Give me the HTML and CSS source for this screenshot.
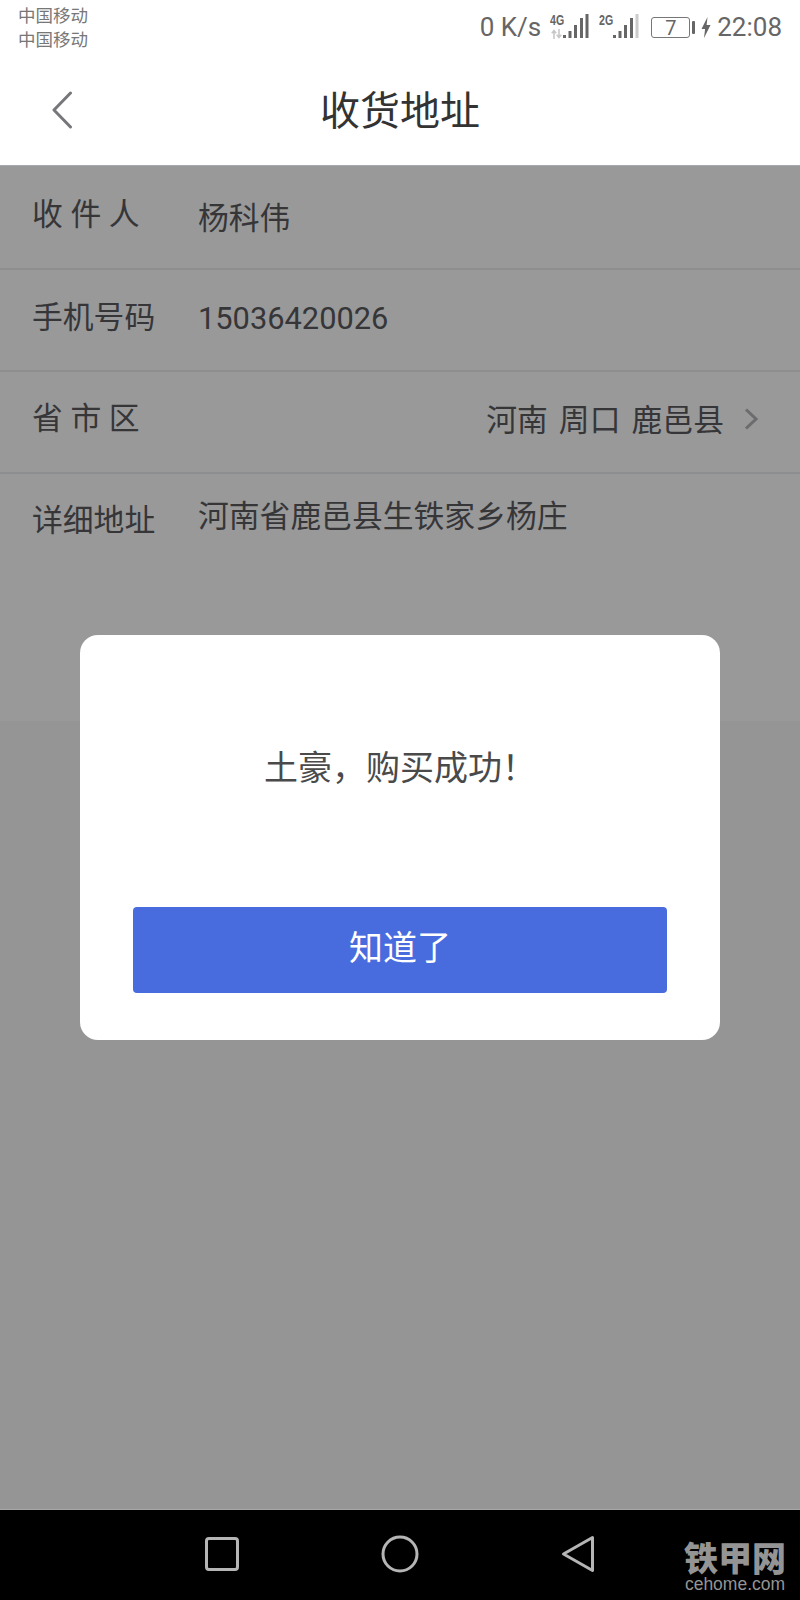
FILE: index.html
```html
<!DOCTYPE html>
<html lang="zh-CN">
<head>
  <meta charset="UTF-8" />
  <meta name="viewport" content="width=device-width, initial-scale=1.0"/>
  <title>收货地址</title>
  <link rel="stylesheet" href="styles.css">
</head>
<body>
  <div class="status-bar">
    <div class="carriers">
      <span>中国移动</span>
      <span>中国移动</span>
    </div>
    <div class="status-right">
      <span class="net-speed">0 K/s</span>
      <div class="signal signal-4g">
        <span class="signal-type">4G</span>
        <svg class="signal-arrows" width="12" height="10" viewBox="0 0 12 10">
          <path d="M3 10V2M0.8 4.2L3 1.5l2.2 2.7M8 0v8M5.8 5.8L8 8.5l2.2-2.7" fill="none" stroke="#c8c8c8" stroke-width="1.6"/>
        </svg>
        <svg class="signal-bars" width="26" height="26" viewBox="0 0 26 26">
          <rect x="0" y="22" width="3" height="3" fill="#666"/>
          <rect x="5.5" y="18" width="3" height="7" fill="#666"/>
          <rect x="11" y="12" width="3" height="13" fill="#666"/>
          <rect x="17" y="5" width="3" height="20" fill="#666"/>
          <rect x="22.5" y="1" width="3" height="24" fill="#666"/>
        </svg>
      </div>
      <div class="signal signal-2g">
        <span class="signal-type">2G</span>
        <svg class="signal-bars" width="26" height="26" viewBox="0 0 26 26">
          <rect x="0" y="22" width="3" height="3" fill="#666"/>
          <rect x="5.5" y="18" width="3" height="7" fill="#666"/>
          <rect x="11" y="12" width="3" height="13" fill="#666"/>
          <rect x="17" y="5" width="3" height="20" fill="#666"/>
          <rect x="22.5" y="1" width="3" height="24" fill="#ccc"/>
        </svg>
      </div>
      <div class="battery">
        <span class="battery-level">7</span>
      </div>
      <span class="battery-nub"></span>
      <svg class="bolt" width="10" height="21" viewBox="0 0 10 21">
        <path d="M6.5 0L0.5 12h3.6L3 21l6.5-13H5.6z" fill="#666"/>
      </svg>
      <span class="clock">22:08</span>
    </div>
  </div>

  <div class="title-bar">
    <svg class="back-icon" width="22" height="38" viewBox="0 0 22 38">
      <path d="M19.5 2L3 19l16.5 17" fill="none" stroke="#77777b" stroke-width="3" stroke-linecap="round" stroke-linejoin="round"/>
    </svg>
    <h1>收货地址</h1>
  </div>

  <div class="content">
    <div class="form">
      <div class="field field-name">
        <span class="field-label">收 件 人</span>
        <span class="field-value">杨科伟</span>
      </div>
      <div class="field field-phone">
        <span class="field-label">手机号码</span>
        <span class="field-value">15036420026</span>
      </div>
      <div class="field field-region">
        <span class="field-label">省 市 区</span>
        <span class="field-value">河南 周口 鹿邑县</span>
        <svg class="chevron" width="14" height="22" viewBox="0 0 14 22">
          <path d="M2 1.5L12 11 2 20.5" fill="none" stroke="#b4b4b8" stroke-width="3"/>
        </svg>
      </div>
      <div class="field field-address">
        <span class="field-label">详细地址</span>
        <span class="field-value">河南省鹿邑县生铁家乡杨庄</span>
      </div>
    </div>

    <div class="overlay">
      <div class="dialog">
        <p class="dialog-text">土豪，购买成功！</p>
        <button class="dialog-button">知道了</button>
      </div>
    </div>
  </div>

  <div class="nav-bar">
    <svg class="nav-square" width="34" height="34" viewBox="0 0 34 34">
      <rect x="1.5" y="1.5" width="31" height="31" rx="2.5" fill="none" stroke="#b5b5b5" stroke-width="3"/>
    </svg>
    <svg width="38" height="38" viewBox="0 0 38 38">
      <circle cx="19" cy="19" r="17" fill="none" stroke="#b5b5b5" stroke-width="3"/>
    </svg>
    <svg class="nav-back" width="34" height="38" viewBox="0 0 34 38">
      <path d="M31.5 2.5L2.5 19l29 16.5z" fill="none" stroke="#b5b5b5" stroke-width="3" stroke-linejoin="round"/>
    </svg>
    <div class="watermark">
      <span class="watermark-cn">铁甲网</span>
      <span class="watermark-en">cehome.com</span>
    </div>
  </div>
</body>
</html>
```

FILE: styles.css
```css
* {
  box-sizing: border-box;
}
body {
  margin: 0;
  height: 1600px;
  display: flex;
  flex-direction: column;
  background: #fff;
  font-family: Roboto, "Noto Sans CJK SC", sans-serif;
  overflow: hidden;
}

/* status bar */
.status-bar {
  height: 56px;
  flex: none;
  display: flex;
  justify-content: space-between;
  padding: 4px 18px 0 18px;
  color: #666;
}
.carriers {
  display: flex;
  flex-direction: column;
  font-size: 17.5px;
  line-height: 24px;
  color: #777;
}
.status-right {
  display: flex;
  align-items: flex-start;
  padding-top: 8px;
  font-size: 26px;
  line-height: 30px;
}
.net-speed {
  margin-right: 9px;
}
.signal {
  position: relative;
  height: 30px;
  display: flex;
  align-items: flex-end;
}
.signal-4g {
  width: 39px;
  padding-left: 13px;
  margin-right: 10px;
}
.signal-2g {
  width: 40px;
  padding-left: 14px;
  margin-right: 12px;
}
.signal-bars {
  margin-bottom: 3px;
}
.signal-type {
  position: absolute;
  left: 0;
  top: 1px;
  font-family: "Liberation Sans", sans-serif;
  font-size: 14px;
  line-height: 14px;
  font-weight: bold;
  transform: scaleX(0.76);
  transform-origin: left top;
}
.signal-arrows {
  position: absolute;
  left: 1px;
  top: 17px;
}
.battery {
  width: 39px;
  height: 21px;
  margin-top: 5px;
  border: 1.5px solid #777;
  border-radius: 3px;
  display: flex;
  align-items: center;
  justify-content: center;
}
.battery-level {
  font-size: 20px;
  line-height: 18px;
  color: #666;
}
.battery-nub {
  width: 3px;
  height: 13px;
  margin: 9px 6px 0 2px;
  background: #666;
  border-radius: 1px;
}
.bolt {
  margin: 5px 6px 0 0;
}

/* title */
.title-bar {
  height: 110px;
  flex: none;
  position: relative;
  display: flex;
  align-items: center;
  justify-content: center;
  padding-bottom: 5px;
  border-bottom: 1px solid #a6a9ad;
}
.title-bar h1 {
  margin: 0;
  font-size: 40px;
  font-weight: 400;
  color: #333;
}
.back-icon {
  position: absolute;
  left: 51px;
  top: 35px;
}

/* form under the dim layer */
.content {
  flex: 1;
  position: relative;
  background: #f8f8f8;
}
.form {
  height: 555px;
  background: #fff;
  display: flex;
  flex-direction: column;
  color: #5a5b60;
  font-size: 30.8px;
}
.field {
  height: 102px;
  flex: none;
  display: flex;
  align-items: center;
  padding: 0 33px 0 32px;
  border-bottom: 2px solid #ecedf1;
}
.field-label {
  width: 166px;
  flex: none;
}
.field-name {
  height: 104px;
}
.field-name .field-label {
  margin-top: -11px;
}
.field-name .field-value {
  margin-top: -3px;
}
.field-phone .field-label {
  margin-top: -12px;
}
.field-phone .field-value {
  margin-top: -4px;
}
.field-region .field-label {
  margin-top: -13px;
}
.field-region .field-value {
  margin: -9px 20px 0 auto;
  word-spacing: 3.5px;
}
.field-region .chevron {
  margin: -7px 9px 0 0;
}
.field-address {
  flex: 1;
  align-items: flex-start;
  padding-top: 17px;
  border-bottom: none;
}
.field-address .field-label {
  margin-top: 4px;
}
.chevron {
  flex: none;
}

/* dialog */
.overlay {
  position: absolute;
  top: 0;
  left: 0;
  right: 0;
  bottom: 0;
  background: rgba(0, 0, 0, 0.4);
  display: flex;
  align-items: center;
  justify-content: center;
}
.dialog {
  width: 640px;
  height: 405px;
  background: #fff;
  border-radius: 18px;
  padding: 0 53px 47px;
  display: flex;
  flex-direction: column;
  justify-content: space-between;
}
.dialog-text {
  margin: 109px 0 0;
  text-align: center;
  font-size: 34px;
  line-height: 48px;
  color: #4a4a4a;
}
.dialog-button {
  height: 86px;
  border: none;
  border-radius: 4px;
  background: #486cdd;
  color: #fff;
  font-family: inherit;
  font-size: 34px;
  padding: 0 0 10px;
}

/* bottom navigation */
.nav-bar {
  height: 91px;
  flex: none;
  position: relative;
  background: #000;
  border-top: 1px solid #a8a8a8;
  display: flex;
  align-items: center;
  justify-content: center;
  gap: 144px;
  padding: 0 0 3px;
}
.nav-square {
  margin-right: -2px;
}
.nav-back {
  margin-left: -2px;
}
.watermark {
  position: absolute;
  left: 684px;
  top: 34px;
  width: 102px;
  display: flex;
  flex-direction: column;
  color: #949494;
  text-align: center;
}
.watermark-cn {
  font-size: 34px;
  line-height: 30px;
  font-weight: 900;
}
.watermark-en {
  margin-top: 2px;
  font-family: "Liberation Sans", sans-serif;
  font-size: 17.5px;
  line-height: 17px;
}
```
